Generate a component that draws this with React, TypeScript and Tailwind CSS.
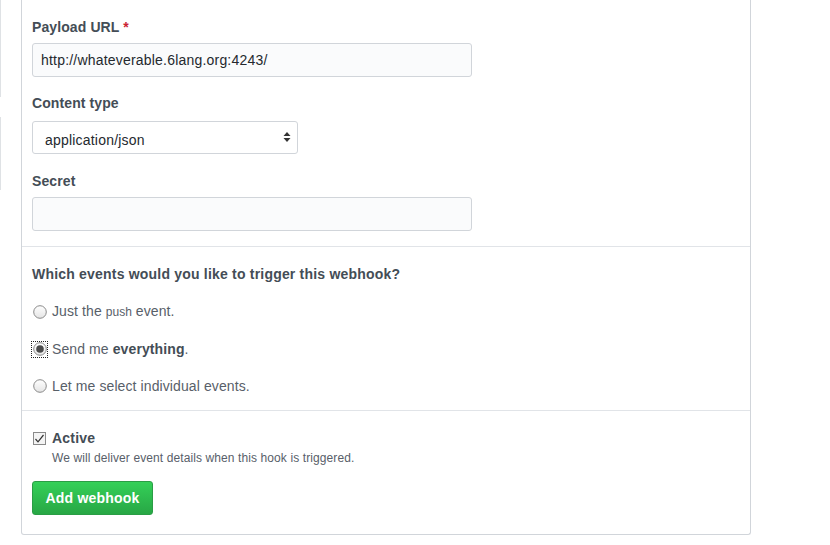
import React from "react";

function Radio({ checked, focus }: { checked?: boolean; focus?: boolean }) {
  return (
    <span className={`flex items-center justify-center w-[15px] h-[15px] ${focus ? "outline outline-1 outline-dotted outline-[#222]" : ""}`}>
      <svg width="14" height="14" viewBox="0 0 14 14">
        <defs>
          <linearGradient id="rg" x1="0" y1="0" x2="0" y2="1">
            <stop offset="0" stopColor="#ffffff" />
            <stop offset="1" stopColor="#e4e4e4" />
          </linearGradient>
        </defs>
        <circle cx="7" cy="7" r="6.3" fill="url(#rg)" stroke="#8a8a8a" strokeWidth="1" />
        {checked && <circle cx="7" cy="7" r="3.8" fill="#4a4a4a" />}
      </svg>
    </span>
  );
}

export default function App() {
  return (
    <div
      className="w-[830px] h-[545px] bg-white flex overflow-hidden tracking-[0.2px]"
      style={{ fontFamily: '"Liberation Sans", Arial, sans-serif' }}
    >
      <div className="w-px flex flex-col shrink-0">
        <div className="h-[97px] bg-[#dfe2e5]" />
        <div className="h-[20px]" />
        <div className="h-[73px] bg-[#dfe2e5]" />
      </div>
      <div className="ml-[20px] w-[730px] h-[535px] border-x border-b border-[#d1d5da] rounded-b-[3px] flex flex-col">
        <div className="px-[10px] pt-[18px] pb-[15px] border-b border-[#e1e4e8] flex flex-col">
          <div className="text-[14px] font-bold text-[#444d56] leading-[18px] tracking-[0.1px]">
            Payload URL <span className="text-[#cb2431]">*</span>
          </div>
          <div className="mt-[7px] w-[440px] h-[34px] bg-[#fafbfc] border border-[#d1d5da] rounded-[3px] flex items-center px-[8px] text-[14px] text-[#24292e]">
            http://whateverable.6lang.org:4243/
          </div>
          <div className="mt-[17px] text-[14px] font-bold text-[#444d56] leading-[18px] tracking-[0.1px]">Content type</div>
          <div className="mt-[9px] w-[266px] h-[33px] bg-white border border-[#d1d5da] rounded-[3px] flex items-center justify-between pl-[12px] pr-[6px] text-[14px] text-[#24292e]">
            <span className="pt-[6px]">application/json</span>
            <svg width="8" height="12" viewBox="0 0 8 12" className="mb-[1px]">
              <path d="M4 1 L7.5 5 L0.5 5 Z" fill="#333" />
              <path d="M4 11 L7.5 7 L0.5 7 Z" fill="#333" />
            </svg>
          </div>
          <div className="mt-[18px] text-[14px] font-bold text-[#444d56] leading-[18px] tracking-[0.1px]">Secret</div>
          <div className="mt-[7px] w-[440px] h-[34px] bg-[#fafbfc] border border-[#d1d5da] rounded-[3px]" />
        </div>
        <div className="px-[10px] pt-[18px] pb-[15px] border-b border-[#e1e4e8] flex flex-col">
          <div className="text-[14px] font-bold text-[#444d56] leading-[18px]">
            Which events would you like to trigger this webhook?
          </div>
          <div className="mt-[19px] flex items-center gap-[5px] text-[14px] text-[#586069] leading-[18px] tracking-[0.1px]">
            <Radio />
            <span>
              Just the <span className="text-[12px] tracking-normal">push</span> event.
            </span>
          </div>
          <div className="mt-[19px] flex items-center gap-[5px] text-[14px] text-[#586069] leading-[18px] tracking-[0.1px]">
            <Radio checked focus />
            <span>
              Send me <b className="text-[#444d56]">everything</b>.
            </span>
          </div>
          <div className="mt-[19px] flex items-center gap-[5px] text-[14px] text-[#586069] leading-[18px] tracking-[0.1px]">
            <Radio />
            <span>Let me select individual events.</span>
          </div>
        </div>
        <div className="px-[10px] pt-[18px] flex flex-col">
          <div className="flex items-center gap-[6px]">
            <svg width="13" height="13" viewBox="0 0 13 13" className="ml-[1px]">
              <rect x="0.5" y="0.5" width="12" height="12" fill="#f4f4f4" stroke="#8a8a8a" />
              <path d="M2.5 7 L5 9.8 L10.5 3" fill="none" stroke="#333" strokeWidth="1.2" />
            </svg>
            <span className="text-[14px] font-bold text-[#444d56] leading-[18px]">Active</span>
          </div>
          <div className="ml-[20px] mt-[3px] text-[12px] text-[#586069] leading-[16px] tracking-[0.1px]">
            We will deliver event details when this hook is triggered.
          </div>
          <button className="mt-[15px] w-[121px] h-[34px] rounded-[3px] border border-[#2a9d45] bg-gradient-to-b from-[#34d058] to-[#28a745] text-white text-[14px] font-bold flex items-center justify-center">
            Add webhook
          </button>
        </div>
      </div>
    </div>
  );
}
